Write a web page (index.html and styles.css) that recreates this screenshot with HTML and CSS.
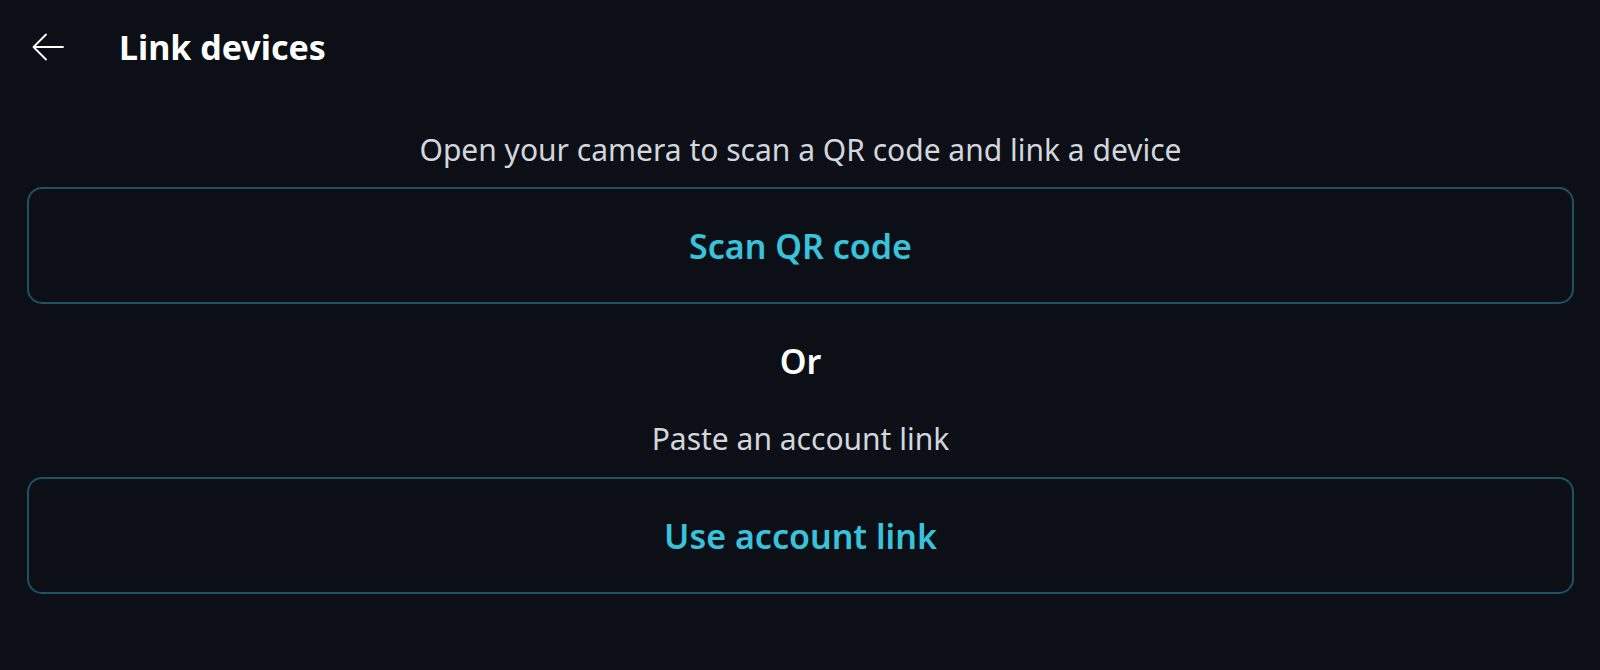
FILE: index.html
```html
<!DOCTYPE html>
<html lang="en">
<head>
  <meta charset="UTF-8" />
  <meta name="viewport" content="width=device-width, initial-scale=1.0"/>
  <title>Link devices</title>
  <link rel="stylesheet" href="styles.css">
</head>
<body>

  <header class="topbar">
    <button class="back-btn" aria-label="Back">
      <svg width="32" height="28" viewBox="0 0 32 28" fill="none" stroke="#ffffff" stroke-width="1.8" stroke-linecap="round" stroke-linejoin="round">
        <path d="M31 14H2" />
        <path d="M14 1.5L1.5 14L14 26.5" />
      </svg>
    </button>
    <h1>Link devices</h1>
  </header>

  <main class="content">
    <p class="hint">Open your camera to scan a QR code and link a device</p>
    <button class="outline-btn">Scan QR code</button>

    <div class="divider">Or</div>

    <p class="hint hint-paste">Paste an account link</p>
    <button class="outline-btn">Use account link</button>
  </main>

</body>
</html>
```

FILE: styles.css
```css
body {
  margin: 0;
  background-color: #0c0f16;
  color: #ffffff;
  font-family: "Noto Sans", "Open Sans", sans-serif;
}

.topbar {
  display: flex;
  align-items: center;
  height: 94px;
  padding-left: 32px;
}

.back-btn {
  background: none;
  border: none;
  padding: 0;
  width: 32px;
  height: 28px;
  display: flex;
  cursor: pointer;
}

.topbar h1 {
  margin: 0 0 0 55px;
  font-size: 34px;
  font-weight: 700;
  color: #ffffff;
}

.content {
  display: flex;
  flex-direction: column;
  align-items: stretch;
  padding: 0 26px 0 27px;
}

.hint {
  margin: 37px 0 18px;
  text-align: center;
  font-size: 30px;
  line-height: 38px;
  color: #d3d6dd;
}

.hint-paste {
  margin-top: 39px;
  margin-bottom: 19px;
}

.outline-btn {
  height: 117px;
  background: transparent;
  border: 2px solid #1d5163;
  border-radius: 15px;
  font-family: inherit;
  font-size: 34px;
  font-weight: 600;
  color: #37c3db;
  cursor: pointer;
}

.outline-btn:hover {
  border-color: #2a6c80;
}

.divider {
  margin-top: 37px;
  text-align: center;
  font-size: 34px;
  font-weight: 600;
  line-height: 40px;
  color: #ffffff;
}
```
